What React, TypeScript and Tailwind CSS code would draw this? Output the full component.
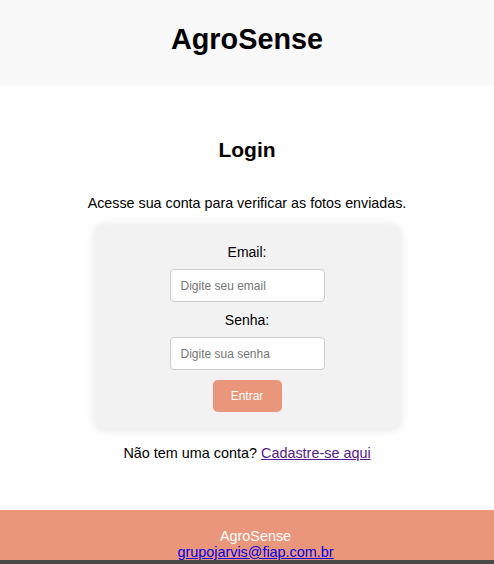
import React from "react";

export default function App() {
  return (
    <div className="w-[494px] h-[564px] overflow-hidden bg-white text-black flex flex-col" style={{ fontFamily: '"Liberation Sans", Arial, sans-serif' }}>
      <header className="h-[85px] bg-[#f8f8f8] flex items-center justify-center shrink-0">
        <h1 className="text-[28.8px] font-bold leading-[32px] mt-[-8px]">AgroSense</h1>
      </header>
      <main className="flex flex-col items-center shrink-0">
        <h2 className="mt-[53px] text-[21px] font-bold leading-[24px]">Login</h2>
        <p className="mt-[32px] text-[14.3px] leading-[18px]">Acesse sua conta para verificar as fotos enviadas.</p>
        <div className="mt-[13px] w-[307px] h-[205px] bg-[#f2f2f2] rounded-[10px] shadow-[0_0_10px_rgba(0,0,0,0.1)] flex flex-col items-center pt-[19px]">
          <label className="text-[14px] leading-[16px]">Email:</label>
          <input
            type="email"
            placeholder="Digite seu email"
            className="mt-[9px] w-[155px] h-[33px] bg-white border border-[#cccccc] rounded-[4px] px-[10px] text-[12px] placeholder:text-[#757575] outline-none"
          />
          <label className="mt-[10px] text-[14px] leading-[16px]">Senha:</label>
          <input
            type="password"
            placeholder="Digite sua senha"
            className="mt-[9px] w-[155px] h-[33px] bg-white border border-[#cccccc] rounded-[4px] px-[10px] text-[12px] placeholder:text-[#757575] outline-none"
          />
          <button className="mt-[10px] w-[69px] h-[32px] bg-[#e9967a] text-white text-[12px] rounded-[5px]">Entrar</button>
        </div>
        <p className="mt-[14px] text-[14.4px] leading-[18px]">
          Não tem uma conta? <a href="#" className="text-[#551a8b] underline">Cadastre-se aqui</a>
        </p>
      </main>
      <footer className="mt-[48px] h-[50px] bg-[#e9967a] flex flex-col items-center pt-[18px] pl-[17px] text-[14.4px] leading-[16px] shrink-0">
        <span className="text-white">AgroSense</span>
        <a href="#" className="text-[#0000ee] underline">grupojarvis@fiap.com.br</a>
      </footer>
      <div className="h-[4px] bg-[#4a4a4a] shrink-0" />
    </div>
  );
}
